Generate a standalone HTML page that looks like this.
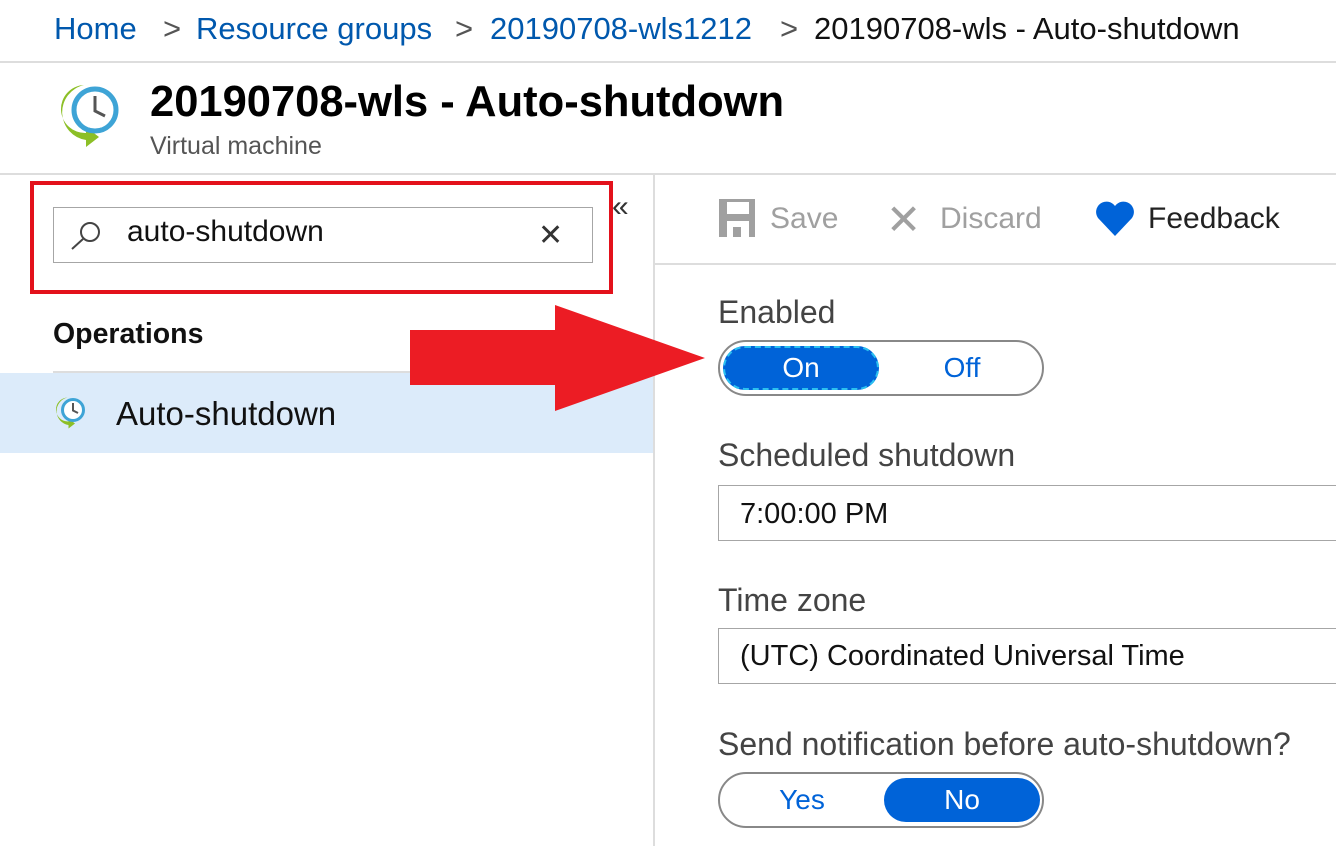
<!DOCTYPE html>
<html><head><meta charset="utf-8"><style>
body{margin:0;width:1336px;height:846px;overflow:hidden;background:#fff;font-family:"Liberation Sans","DejaVu Sans",sans-serif;position:relative}
.a{position:absolute;white-space:nowrap}
.bc{top:11px;font-size:31px;color:#0058ad}
.lbl{font-size:32px;color:#444}
.inp{position:absolute;border:1px solid #a6a6a6;font-size:29px;color:#111;box-sizing:border-box}
.tog{position:absolute;left:718px;width:326px;height:56px;border:2px solid #888;border-radius:28px;box-sizing:border-box}
.pill{position:absolute;top:4px;height:44px;width:156px;border-radius:22px;background:#0063d8;color:#fff;font-size:28px;text-align:center;line-height:44px}
.off{position:absolute;top:4px;height:44px;width:156px;color:#0063d8;font-size:28px;text-align:center;line-height:44px}
</style></head><body>
<div class="a bc" style="left:54px">Home</div>
<div class="a bc" style="left:163px;color:#555">&gt;</div>
<div class="a bc" style="left:196px">Resource groups</div>
<div class="a bc" style="left:455px;color:#555">&gt;</div>
<div class="a bc" style="left:490px">20190708-wls1212</div>
<div class="a bc" style="left:780px;color:#555">&gt;</div>
<div class="a bc" style="left:814px;color:#111">20190708-wls - Auto-shutdown</div>
<div class="a" style="left:0;top:61px;width:1336px;height:2px;background:#ddd"></div>
<svg class="a" style="left:56px;top:82px" width="66" height="72" viewBox="0 0 66 72">
<path d="M28 3 A28 28 0 0 0 30 58 L30 65 L43 55 L30 45 L30 51 A23 23 0 0 1 28 3Z" fill="#8cbf26"/>
<circle cx="39" cy="28" r="21" fill="#fff" stroke="#3ea4d6" stroke-width="5"/>
<path d="M39 14 V29 L49 34" stroke="#555" stroke-width="3" fill="none"/>
</svg>
<div class="a" style="left:150px;top:78px;font-size:43.5px;font-weight:bold;color:#000">20190708-wls - Auto-shutdown</div>
<div class="a" style="left:150px;top:132px;font-size:25px;color:#555">Virtual machine</div>
<div class="a" style="left:0;top:173px;width:1336px;height:2px;background:#ddd"></div>
<div class="a" style="left:653px;top:175px;width:2px;height:671px;background:#ddd"></div>
<div class="a" style="left:30px;top:181px;width:575px;height:105px;border:4px solid #e3111b"></div>
<div class="inp" style="left:53px;top:207px;width:540px;height:56px"></div>
<svg class="a" style="left:68px;top:220px" width="36" height="32"><circle cx="22" cy="12" r="9" fill="none" stroke="#444" stroke-width="2"/><path d="M15 19 L4 29" stroke="#444" stroke-width="2"/></svg>
<div class="a" style="left:127px;top:215px;font-size:30px;color:#111">auto-shutdown</div>
<div class="a" style="left:538px;top:218px;font-size:30px;font-weight:bold;color:#333">✕</div>
<div class="a" style="left:612px;top:190px;font-size:30px;color:#333">«</div>
<div class="a" style="left:53px;top:318px;font-size:28.5px;font-weight:bold;color:#111">Operations</div>
<div class="a" style="left:53px;top:371px;width:600px;height:2px;background:#ddd"></div>
<div class="a" style="left:0;top:373px;width:653px;height:80px;background:#dcebfa"></div>
<svg class="a" style="left:53px;top:396px" width="34" height="36" viewBox="0 0 66 72">
<path d="M28 3 A28 28 0 0 0 30 58 L30 65 L43 55 L30 45 L30 51 A23 23 0 0 1 28 3Z" fill="#8cbf26"/>
<circle cx="39" cy="28" r="21" fill="#fff" stroke="#3ea4d6" stroke-width="6"/>
<path d="M39 14 V29 L49 34" stroke="#555" stroke-width="4" fill="none"/></svg>
<div class="a" style="left:116px;top:395px;font-size:33px;color:#111">Auto-shutdown</div>
<svg class="a" style="left:408px;top:303px" width="300" height="110"><polygon points="2,27 147,27 147,2 297,55 147,108 147,82 2,82" fill="#ec1c24"/></svg>
<svg class="a" style="left:717px;top:197px" width="42" height="42"><path d="M2 2 H38 V40 H2Z" fill="#a0a0a0"/><rect x="10" y="5" width="22" height="12" fill="#fff"/><rect x="10" y="24" width="22" height="16" fill="#fff"/><rect x="16" y="30" width="8" height="10" fill="#a0a0a0"/></svg>
<div class="a" style="left:770px;top:202px;font-size:30px;color:#a0a0a0">Save</div>
<div class="a" style="left:886px;top:195px;font-size:42px;font-weight:bold;color:#a0a0a0">✕</div>
<div class="a" style="left:940px;top:202px;font-size:30px;color:#a0a0a0">Discard</div>
<svg class="a" style="left:1094px;top:200px" width="42" height="38"><path d="M21 36 L4 18 A9 9 0 0 1 21 6 A9 9 0 0 1 38 18Z" fill="#0063d8"/></svg>
<div class="a" style="left:1148px;top:202px;font-size:30px;color:#222">Feedback</div>
<div class="a" style="left:655px;top:263px;width:681px;height:2px;background:#ddd"></div>
<div class="a lbl" style="left:718px;top:294px">Enabled</div>
<div class="tog" style="top:340px"><div class="pill" style="left:3px;outline:2px dashed #2bc0f0;outline-offset:-2px">On</div><div class="off" style="left:164px">Off</div></div>
<div class="a lbl" style="left:718px;top:437px">Scheduled shutdown</div>
<div class="inp" style="left:718px;top:485px;width:640px;height:56px;padding:12px 0 0 21px">7:00:00 PM</div>
<div class="a lbl" style="left:718px;top:582px">Time zone</div>
<div class="inp" style="left:718px;top:628px;width:640px;height:56px;padding:11px 0 0 21px">(UTC) Coordinated Universal Time</div>
<div class="a lbl" style="left:718px;top:726px">Send notification before auto-shutdown?</div>
<div class="tog" style="top:772px"><div class="off" style="left:4px">Yes</div><div class="pill" style="left:164px">No</div></div>
</body></html>
